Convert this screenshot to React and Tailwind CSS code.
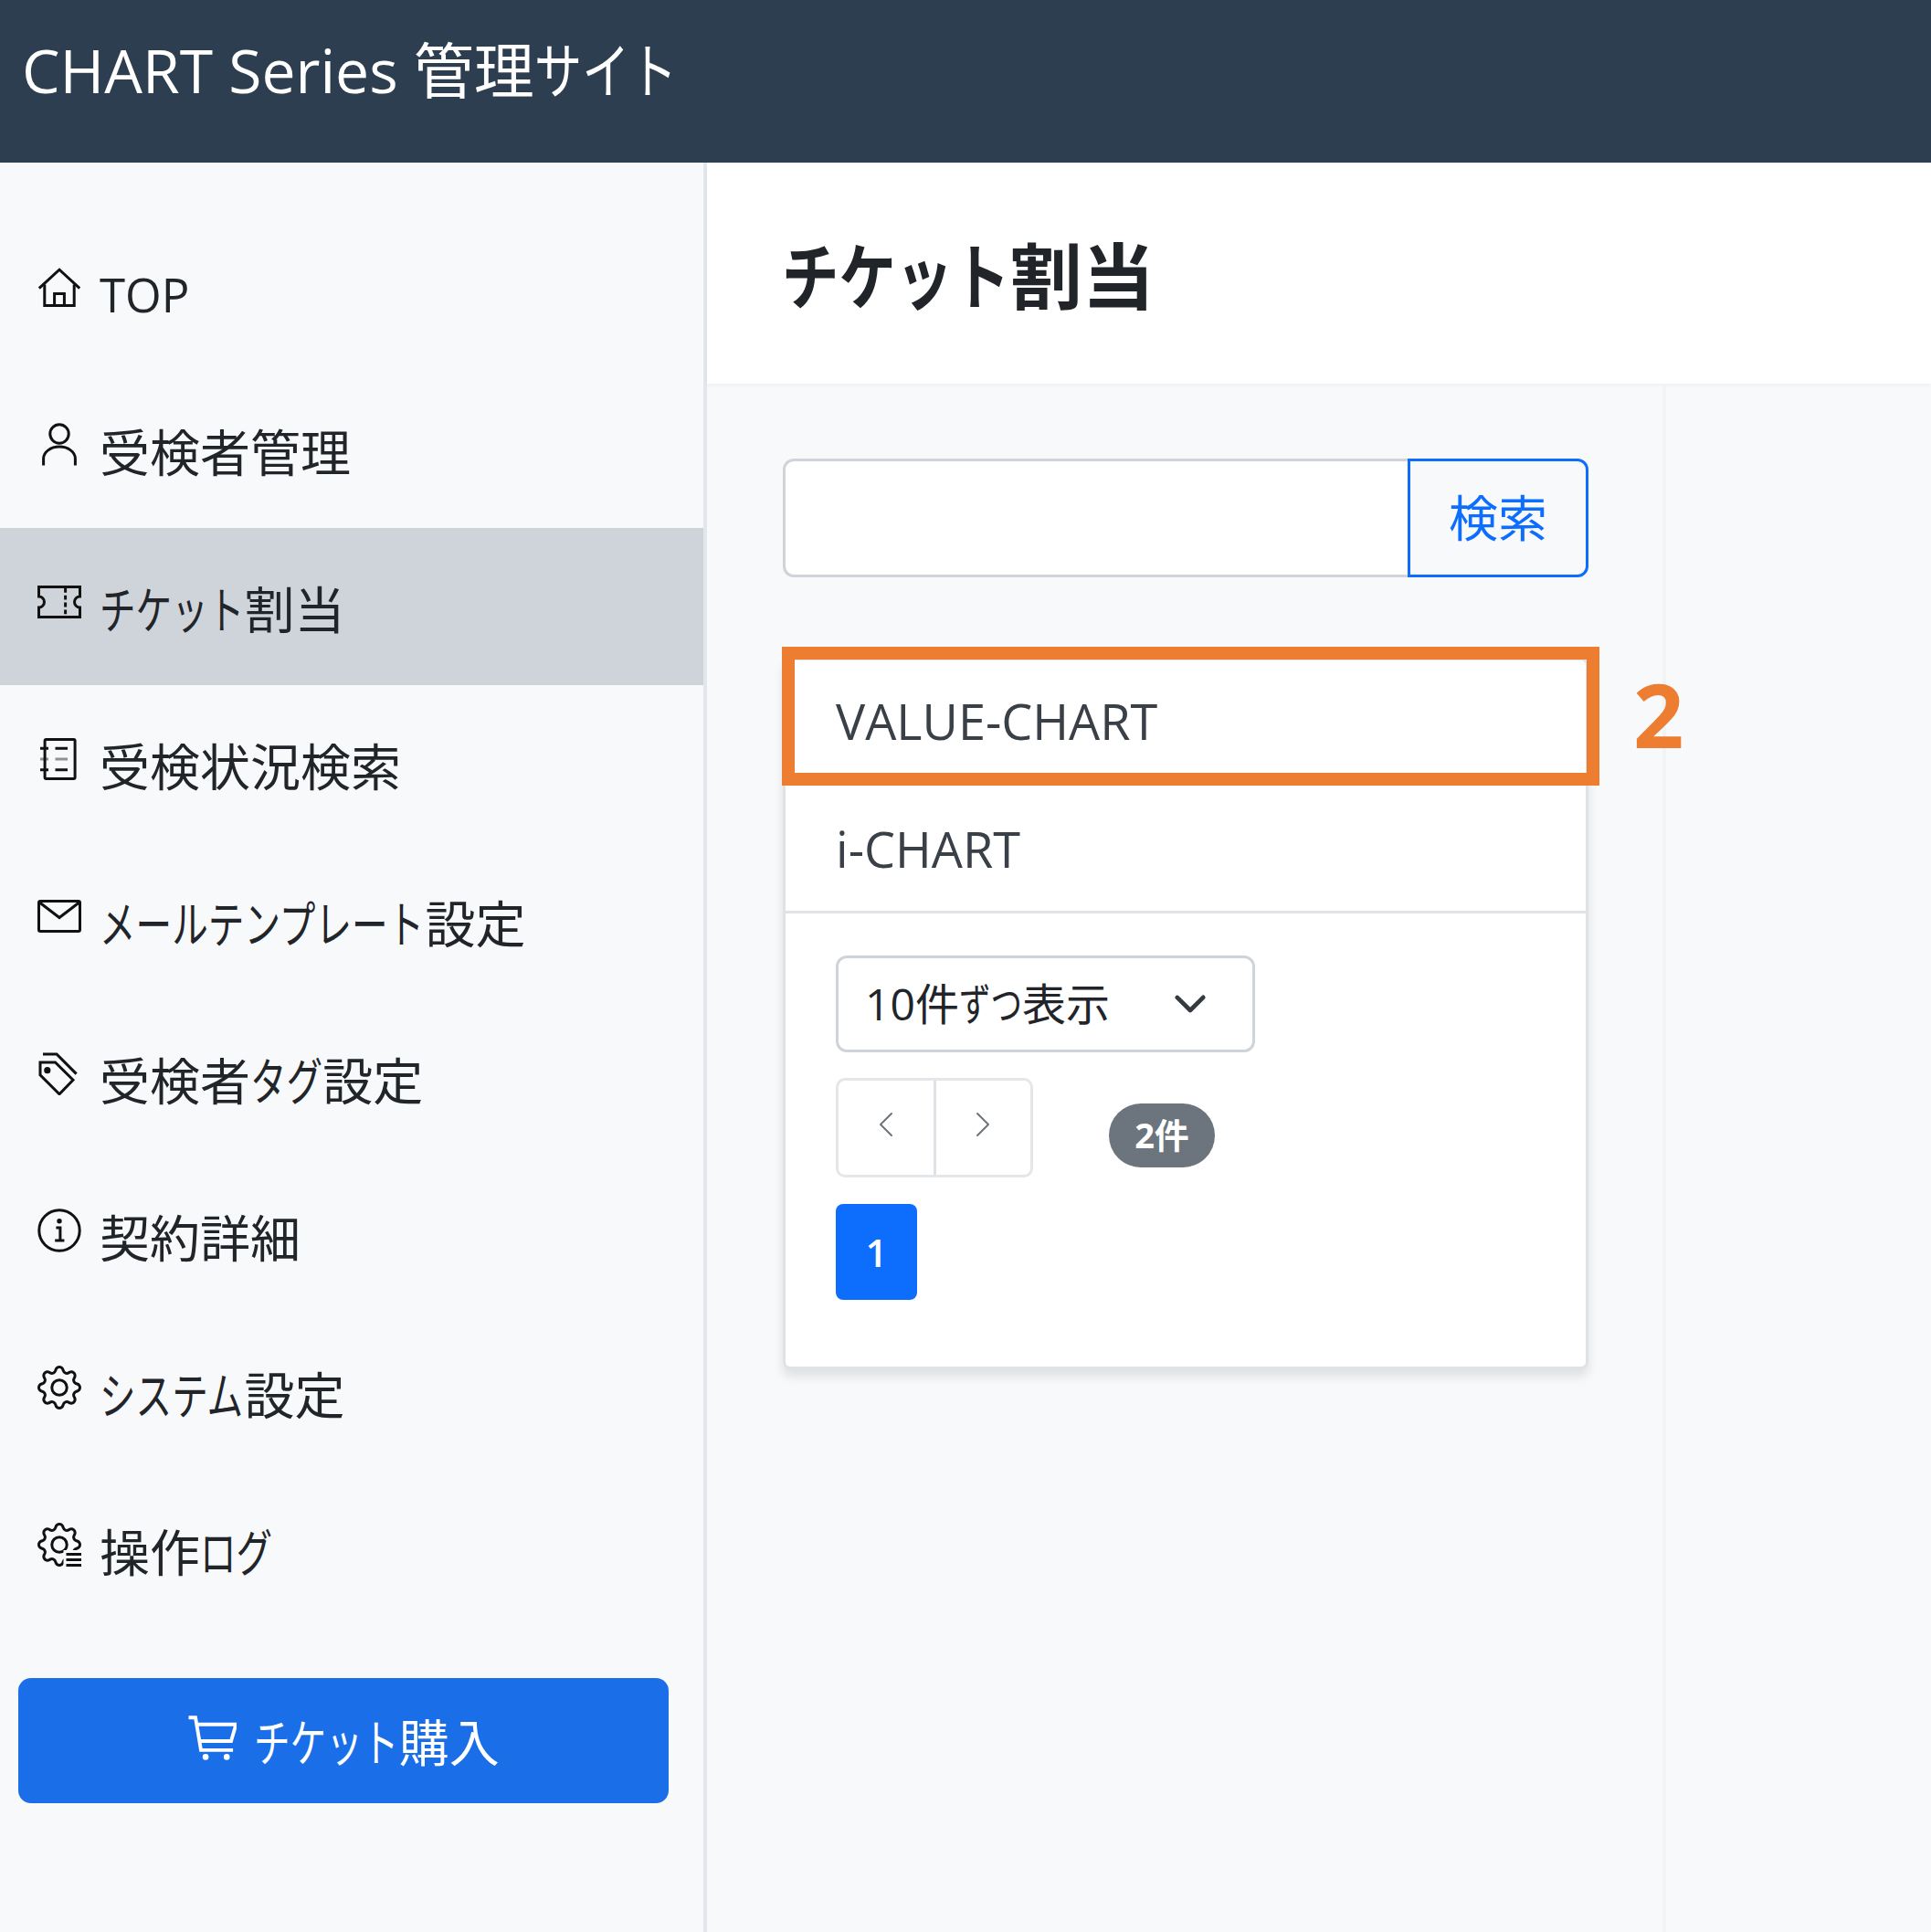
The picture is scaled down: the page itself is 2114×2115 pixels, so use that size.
import React from "react";
import { BsGear, BsChevronLeft, BsChevronRight, BsChevronDown } from "react-icons/bs";

const FONT = "font-['Open_Sans','Noto_Sans_CJK_JP',sans-serif]";

// the original font has narrow kana, so runs of kana get squeezed
const Jp = ({ text, wide }) => {
  const parts = text.split(/([\u3040-\u30ff]+)/).filter(Boolean);
  const ratio = wide ? 0.79 : 0.72;
  return (
    <span className="whitespace-nowrap">
      {parts.map((part, i) =>
        /^[\u3040-\u30ff]/.test(part) ? (
          <span key={i} className="inline-block" style={{ width: `${part.length * ratio}em` }}>
            <span
              className={`inline-block origin-left ${wide ? "scale-x-[0.79]" : "scale-x-[0.72]"}`}
            >
              {part}
            </span>
          </span>
        ) : (
          <span key={i}>{part}</span>
        )
      )}
    </span>
  );
};

const Icon = ({ className, children, box = "0 0 16 16", sw = "1" }) => (
  <svg viewBox={box} fill="none" stroke="currentColor" strokeWidth={sw} className={className}>
    {children}
  </svg>
);

const HomeIcon = (p) => (
  <Icon {...p}>
    <path d="M.6 8.2 8 1.4l7.4 6.8" />
    <path d="M2.6 6.8v7.7h10.8V6.8" />
    <path d="M6.2 14.5v-4.3h3.6v4.3" />
  </Icon>
);
const PersonIcon = (p) => (
  <Icon {...p}>
    <circle cx="8" cy="4" r="3.4" />
    <path d="M2.2 15.5V13a5.8 4.3 0 0 1 11.6 0v2.5" />
  </Icon>
);
const TicketIcon = (p) => (
  <Icon {...p}>
    <path d="M.5 2.5h15V6a2 2 0 0 0 0 4v3.5H.5V10a2 2 0 0 0 0-4z" />
    <path d="M10.2 3v10" strokeDasharray="1.6 1" />
  </Icon>
);
const JournalIcon = (p) => (
  <Icon {...p}>
    <rect x="2.7" y=".8" width="11" height="14.4" rx=".5" />
    <path d="M1 4.1h3M6.5 4.1h4.5M1 11.9h3M6.5 11.9h4.5" />
    <path d="M1 8h3M6.5 8h4.5" opacity="0.45" />
  </Icon>
);
const MailIcon = (p) => (
  <Icon {...p}>
    <rect x=".5" y="2.5" width="15" height="11" rx=".6" />
    <path d="M.8 3 8 8.5 15.2 3" />
  </Icon>
);
const TagIcon = (p) => (
  <Icon {...p}>
    <path d="M1 4h5.5L13 10.4 8 15.6 1 8.6z" />
    <path d="M2 1h5l7.2 7.2" />
    <circle cx="3.6" cy="6.9" r=".7" fill="currentColor" />
  </Icon>
);
const InfoIcon = (p) => (
  <Icon {...p}>
    <circle cx="8" cy="8" r="7.4" />
    <path d="M6.8 7h1.5v4.6M6.4 11.7h3.4" />
    <circle cx="8" cy="4.6" r=".9" fill="currentColor" stroke="none" />
  </Icon>
);
const GearIcon = ({ className }) => <BsGear className={className} />;
const GearLogIcon = ({ className }) => (
  <svg viewBox="0 0 16 16" fill="currentColor" className={className}>
    <defs>
      <clipPath id="gear-log-clip">
        <path d="M0 0H16V10H9.5V16H0Z" />
      </clipPath>
    </defs>
    <g clipPath="url(#gear-log-clip)">
      <path d="M8 4.754a3.246 3.246 0 1 0 0 6.492 3.246 3.246 0 0 0 0-6.492M5.754 8a2.246 2.246 0 1 1 4.492 0 2.246 2.246 0 0 1-4.492 0" />
      <path d="M9.796 1.343c-.527-1.79-3.065-1.79-3.592 0l-.094.319a.873.873 0 0 1-1.255.52l-.292-.16c-1.64-.892-3.433.902-2.54 2.541l.159.292a.873.873 0 0 1-.52 1.255l-.319.094c-1.79.527-1.79 3.065 0 3.592l.319.094a.873.873 0 0 1 .52 1.255l-.16.292c-.892 1.64.901 3.434 2.541 2.54l.292-.159a.873.873 0 0 1 1.255.52l.094.319c.527 1.79 3.065 1.79 3.592 0l.094-.319a.873.873 0 0 1 1.255-.52l.292.16c1.64.893 3.434-.902 2.54-2.541l-.159-.292a.873.873 0 0 1 .52-1.255l.319-.094c1.79-.527 1.79-3.065 0-3.592l-.319-.094a.873.873 0 0 1-.52-1.255l.16-.292c.893-1.64-.902-3.433-2.541-2.54l-.292.159a.873.873 0 0 1-1.255-.52zm-2.633.283c.246-.835 1.428-.835 1.674 0l.094.319a1.873 1.873 0 0 0 2.693 1.115l.291-.16c.764-.415 1.6.42 1.184 1.185l-.159.292a1.873 1.873 0 0 0 1.116 2.692l.318.094c.835.246.835 1.428 0 1.674l-.319.094a1.873 1.873 0 0 0-1.115 2.693l.16.291c.415.764-.42 1.6-1.185 1.184l-.291-.159a1.873 1.873 0 0 0-2.693 1.116l-.094.318c-.246.835-1.428.835-1.674 0l-.094-.319a1.873 1.873 0 0 0-2.692-1.115l-.292.16c-.764.415-1.6-.42-1.184-1.185l.159-.291A1.873 1.873 0 0 0 1.945 8.93l-.319-.094c-.835-.246-.835-1.428 0-1.674l.319-.094A1.873 1.873 0 0 0 3.06 4.377l-.16-.292c-.415-.764.42-1.6 1.185-1.184l.292.159a1.873 1.873 0 0 0 2.692-1.115z" />
    </g>
    <path d="M10.5 11h5.5v1h-5.5zM10.5 13h5.5v1h-5.5zM10.5 15h5.5v1h-5.5z" />
  </svg>
);
const CartIcon = (p) => (
  <Icon box="0 0 18 18" sw="1.3" {...p}>
    <path d="M.5 1.4H3l2 11.9h11.7" />
    <path d="M3.9 3.9h13.9L16 10H4.5" />
    <circle cx="6.7" cy="15.8" r="1.1" fill="currentColor" stroke="none" />
    <circle cx="14.4" cy="15.8" r="1.1" fill="currentColor" stroke="none" />
  </Icon>
);

const navItems = [
  { label: "TOP", icon: HomeIcon, latin: true },
  { label: "受検者管理", icon: PersonIcon },
  { label: "チケット割当", icon: TicketIcon, active: true },
  { label: "受検状況検索", icon: JournalIcon },
  { label: "メールテンプレート設定", icon: MailIcon },
  { label: "受検者タグ設定", icon: TagIcon },
  { label: "契約詳細", icon: InfoIcon },
  { label: "システム設定", icon: GearIcon },
  { label: "操作ログ", icon: GearLogIcon },
];

const Sidebar = () => (
  <aside className="w-[774px] shrink-0 border-r-4 border-[#e3e6ea] bg-[#f8f9fb] pt-[56px]">
    {navItems.map((item) => {
      const NavIcon = item.icon;
      return (
        <div
          key={item.label}
          className={`flex h-[172px] items-center pl-[41px] leading-none text-[#212529] ${
            item.latin ? "text-[51px]" : "text-[55px]"
          } ${item.active ? "bg-[#cfd3da]" : ""}`}
        >
          <NavIcon className="mb-[10px] h-[48px] w-[48px] shrink-0 text-[#111]" />
          <span className="ml-[20px] pt-[4px]">
            <Jp text={item.label} />
          </span>
        </div>
      );
    })}
    <button className="mx-[20px] mt-[55px] flex h-[137px] w-[712px] items-center justify-center rounded-[14px] bg-[#1a6ee8] text-[55px] text-white">
      <CartIcon className="mb-[6px] mr-[19px] h-[54px] w-[54px]" />
      <span className="pt-[4px]">
        <Jp text="チケット購入" />
      </span>
    </button>
  </aside>
);

const Pager = () => (
  <div className="pl-[55px] pt-[46px]">
    <div className="flex h-[106px] w-[459px] items-center justify-between rounded-[12px] border-[3px] border-[#ced4da] pl-[29px] pr-[49px] text-[48px] text-[#212529]">
      <Jp text="10件ずつ表示" />
      <BsChevronDown className="h-[38px] w-[38px] stroke-[1px] text-[#343a40]" />
    </div>
    <div className="mt-[28px] flex items-center">
      <div className="flex h-[109px] w-[216px] rounded-[10px] border-[3px] border-[#e4e7ea] text-[#6c757d]">
        <div className="flex flex-1 items-start justify-center border-r-[3px] border-[#dee2e6] pt-[32px]">
          <BsChevronLeft className="h-[32px] w-[32px]" />
        </div>
        <div className="flex flex-1 items-start justify-center pt-[32px]">
          <BsChevronRight className="h-[32px] w-[32px]" />
        </div>
      </div>
      <span className="ml-[83px] mt-[16px] flex h-[70px] w-[116px] items-center justify-center rounded-full bg-[#6c757d] text-[38px] font-bold text-white">
        2件
      </span>
    </div>
    <div className="mt-[29px] flex h-[105px] w-[89px] items-center justify-center rounded-[8px] bg-[#0d6efd] text-[42px] font-semibold text-white">
      1
    </div>
  </div>
);

const App = () => (
  <div className={`flex min-h-[2115px] flex-col bg-[#f8f9fb] ${FONT}`}>
    <header className="flex h-[178px] items-start bg-[#2c3e50] pl-[24px] pt-[32px] text-[66px] leading-[88px] text-white">
      <Jp text="CHART Series 管理サイト" wide />
    </header>
    <div className="flex flex-1">
      <Sidebar />
      <main className="flex-1">
        <div className="flex h-[242px] items-center bg-white pl-[82px] pt-[6px] text-[79px] font-semibold leading-none text-[#212529] shadow-[0_2px_4px_rgba(0,0,0,0.04)]">
          <Jp text="チケット割当" wide />
        </div>
        <div className="h-[1695px] w-[1050px] border-r-4 border-[#f2f3f5] pl-[83px] pt-[82px]">
          <div className="flex h-[130px] w-[882px]">
            <div className="flex-1 rounded-l-[12px] border-[3px] border-r-0 border-[#ced4da] bg-white" />
            <div className="flex w-[198px] items-center justify-center rounded-r-[12px] border-[3px] border-[#0d6efd] text-[54px] text-[#0d6efd]">
              検索
            </div>
          </div>
          <div className="relative mt-[88px] h-[779px] w-[882px] rounded-[8px] border-[3px] border-[#dfe2e6] bg-white text-[54px] text-[#3a4047] shadow-[0_8px_12px_rgba(0,0,0,0.1)]">
            <div className="flex h-[132px] items-center pl-[55px]">VALUE-CHART</div>
            <div className="flex h-[145px] items-center border-b-[3px] border-[#dfe2e6] pl-[55px] pt-[6px]">i-CHART</div>
            <Pager />
            <div className="absolute left-[-4px] top-[-15px] h-[152px] w-[895px] border-[14px] border-[#ed7d31]" />
            <span className="absolute left-[928px] top-[-4px] text-[97px] font-bold leading-[125px] text-[#ed7d31]">
              2
            </span>
          </div>
        </div>
      </main>
    </div>
  </div>
);

export default App;
